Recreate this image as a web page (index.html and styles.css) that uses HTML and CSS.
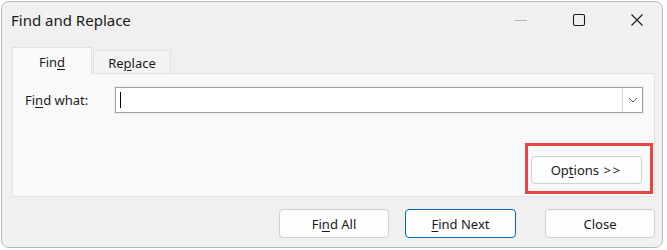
FILE: index.html
```html
<!DOCTYPE html>
<html>
<head>
<meta charset="utf-8">
<link rel="stylesheet" href="styles.css">
</head>
<body>
<div class="window">
  <div class="titlebar">
    <span class="title">Find and Replace</span>
    <div class="controls">
      <span class="ctl"><svg width="14" height="14" viewBox="0 0 14 14"><path d="M1 7.5H13" stroke="#b4b4b4" stroke-width="1"/></svg></span>
      <span class="ctl"><svg width="14" height="14" viewBox="0 0 14 14"><rect x="1.5" y="1.5" width="11" height="11" rx="1.5" fill="none" stroke="#1a1a1a" stroke-width="1.1"/></svg></span>
      <span class="ctl"><svg width="14" height="14" viewBox="0 0 14 14"><path d="M1.5 1.5L12.5 12.5M12.5 1.5L1.5 12.5" stroke="#1a1a1a" stroke-width="1.1"/></svg></span>
    </div>
  </div>
  <div class="tabs">
    <div class="tab active">Fin<u>d</u></div>
    <div class="tab">Re<u>p</u>lace</div>
  </div>
  <div class="panel">
    <div class="row">
      <span class="label">Fi<u>n</u>d what:</span>
      <div class="combo">
        <span class="caret"></span>
        <span class="drop"><svg width="10" height="6" viewBox="0 0 10 6"><path d="M1 1L5 5L9 1" fill="none" stroke="#5a5a5a" stroke-width="1"/></svg></span>
      </div>
    </div>
    <div class="options-wrap">
      <button class="btn options">Op<u>t</u>ions <span class="arrows">&gt;&gt;</span></button>
      <div class="highlight"></div>
    </div>
  </div>
  <div class="actions">
    <button class="btn">Fi<u>n</u>d All</button>
    <button class="btn primary"><u>F</u>ind Next</button>
    <button class="btn close">Close</button>
  </div>
</div>
</body>
</html>
```
FILE: styles.css
```css
body {
  margin: 0;
  background: #ffffff;
  font-family: "Segoe UI", "Noto Sans", sans-serif;
  color: #1a1a1a;
}
u {
  text-decoration: underline;
  text-underline-offset: 2px;
  text-decoration-thickness: 1px;
}
.window {
  margin: 1px 0 0 1px;
  width: 662px;
  height: 247px;
  box-sizing: border-box;
  border: 1px solid #b8b8b8;
  border-radius: 8px;
  background: #f0f0f0;
  display: flex;
  flex-direction: column;
  overflow: hidden;
}
.titlebar {
  height: 45px;
  box-sizing: border-box;
  display: flex;
  align-items: flex-start;
  padding: 7px 10px 0 9px;
}
.title {
  font-size: 15px;
  line-height: 22px;
}
.controls {
  margin-left: auto;
  display: flex;
  gap: 28px;
  padding-top: 4px;
}
.ctl {
  width: 30px;
  height: 14px;
  display: flex;
  justify-content: center;
}
.ctl svg { display: block; }
.tabs {
  display: flex;
  align-items: flex-end;
  height: 26px;
  margin-left: 10px;
}
.tab {
  box-sizing: border-box;
  border: 1px solid #e2e2e2;
  border-bottom: none;
  font-size: 13px;
  display: flex;
  align-items: center;
  justify-content: center;
}
.tab.active {
  width: 80px;
  height: 27px;
  margin-bottom: -1px;
  background: #f9f9f9;
  position: relative;
  z-index: 1;
  padding-top: 2px;
}
.tab:not(.active) {
  width: 78px;
  height: 23px;
  background: #f3f3f3;
  margin-left: 1px;
  border-left: 1px solid #e2e2e2;
  padding-top: 1px;
}
.panel {
  margin: 0 7px 0 10px;
  height: 124px;
  box-sizing: border-box;
  border: 1px solid #e2e2e2;
  background: #f9f9f9;
  display: flex;
  flex-direction: column;
}
.row {
  display: flex;
  align-items: center;
  padding: 13px 0 0 12px;
}
.label {
  width: 90px;
  font-size: 13px;
}
.combo {
  width: 528px;
  height: 26px;
  box-sizing: border-box;
  border: 1px solid #a3a3a3;
  background: #ffffff;
  display: flex;
  align-items: center;
  box-shadow: 0 0 0 1px #ececec;
}
.caret {
  width: 1px;
  height: 16px;
  background: #000;
  margin-left: 4px;
}
.drop {
  margin-left: auto;
  width: 20px;
  height: 24px;
  box-sizing: border-box;
  border-left: 1px solid #d4d4d4;
  display: flex;
  align-items: center;
  justify-content: center;
}
.drop svg { display: block; }
.options-wrap {
  margin: auto 12px 12px auto;
  position: relative;
}
.btn {
  font-family: inherit;
  font-size: 13px;
  color: #1a1a1a;
  width: 110px;
  height: 29px;
  box-sizing: border-box;
  border: 1px solid #d0d0d0;
  border-radius: 4px;
  background: #fdfdfd;
  padding: 0;
  display: block;
}
.options {
  width: 111px;
  height: 28px;
}
.arrows {
  letter-spacing: 2px;
  margin-left: 1px;
}
.highlight {
  position: absolute;
  left: -6px;
  top: -13px;
  width: 128px;
  height: 51px;
  box-sizing: border-box;
  border: 3px solid #e84545;
}
.actions {
  display: flex;
  justify-content: flex-end;
  padding: 12px 7px 0 0;
}
.actions .btn + .btn { margin-left: 16px; }
.actions .btn.close { margin-left: 29px; }
.primary {
  width: 111px;
  border-color: #0067c0;
}
```
